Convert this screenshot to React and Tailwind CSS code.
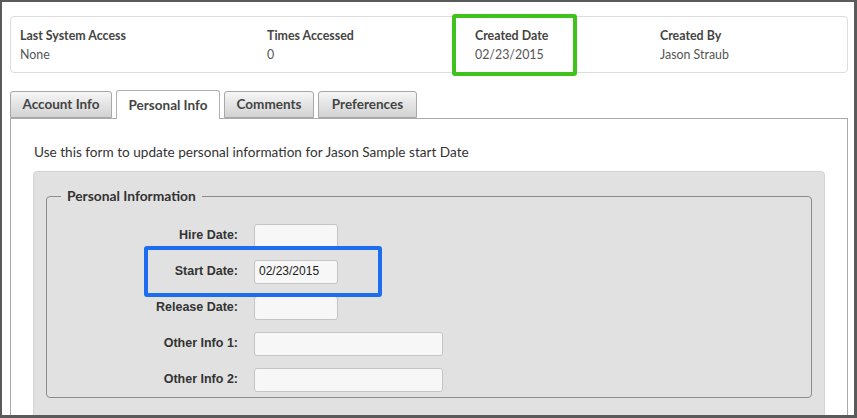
import React from 'react';

const sans = { fontFamily: 'Lato, "Open Sans", sans-serif' };
const arial = { fontFamily: '"Liberation Sans", Arial, sans-serif' };

const stats = [
  { label: 'Last System Access', value: 'None', w: 'w-[247px]' },
  { label: 'Times Accessed', value: '0', w: 'w-[208px]' },
  { label: 'Created Date', value: '02/23/2015', w: 'w-[185px]' },
  { label: 'Created By', value: 'Jason Straub', w: 'w-[150px]' },
];

const tabs = [
  { name: 'Account Info', w: 'w-[102px]' },
  { name: 'Personal Info', w: 'w-[104px]', active: true },
  { name: 'Comments', w: 'w-[90px]' },
  { name: 'Preferences', w: 'w-[99px]' },
];

const fields = [
  { label: 'Hire Date:', value: '', wide: false },
  { label: 'Start Date:', value: '02/23/2015', wide: false },
  { label: 'Release Date:', value: '', wide: false },
  { label: 'Other Info 1:', value: '', wide: true },
  { label: 'Other Info 2:', value: '', wide: true },
];

const App = () => {
  return (
    <div className="relative w-[857px] h-[418px] overflow-hidden bg-white border-l-2 border-t-2 border-r-[3px] border-b-[3px] border-[#5a5a5a]" style={sans}>
      <div className="pl-[8px] pr-[6px] pt-[14px]">
        {/* Summary card */}
        <div className="flex h-[57px] rounded-[4px] border border-[#dcdcdc] pl-[9px] pt-[11px]">
          {stats.map((s) => (
            <div key={s.label} className={s.w}>
              <div className="text-[12.4px] font-bold leading-[16px] text-[#444]">{s.label}</div>
              <div className="text-[12.4px] leading-[21px] text-[#555]">{s.value}</div>
            </div>
          ))}
        </div>

        {/* Tabs */}
        <div className="mt-[17px] flex items-end gap-[4px] h-[28px]">
          {tabs.map((t) => (
            <div
              key={t.name}
              className={
                t.active
                  ? `${t.w} h-[29px] -mb-px relative z-10 flex items-center justify-center rounded-t-[3px] border border-b-0 border-[#b0b0b0] bg-white text-[13.5px] font-bold text-[#444]`
                  : `${t.w} h-[27px] flex items-center justify-center rounded-t-[3px] border border-[#a8a8a8] bg-gradient-to-b from-[#f6f6f6] to-[#d2d2d2] text-[13.5px] font-bold text-[#444]`
              }
            >
              {t.name}
            </div>
          ))}
        </div>

        {/* Content panel */}
        <div className="h-[320px] border border-[#aaaaaa] pt-[24px] px-[22px]">
          <p className="text-[13.6px] leading-[18px] text-[#333] pl-[1px]">
            Use this form to update personal information for Jason Sample start Date
          </p>
          <div className="mt-[10px] h-[260px] rounded-t-[4px] border border-[#d4d4d4] bg-[#e1e1e1] px-[12px] pt-[14px]">
            <fieldset className="rounded-[4px] border border-[#8c8c8c] h-[212px]">
              <legend className="ml-[14px] px-[6px] text-[13.8px] font-bold text-[#333]">Personal Information</legend>
              <div className="flex flex-col gap-[12px] pt-[17px]">
                {fields.map((f) => (
                  <div key={f.label} className="flex items-center">
                    <div className="w-[207px] pr-[16px] text-right text-[12.5px] font-bold text-[#333]" style={arial}>
                      {f.label}
                    </div>
                    <div
                      className={`${f.wide ? 'w-[189px]' : 'w-[84px]'} h-[24px] rounded-[3px] border border-[#c4c4c4] bg-[#f7f7f7] px-[4px] text-[12px] leading-[20px] text-[#222]`}
                      style={arial}
                    >
                      {f.value}
                    </div>
                  </div>
                ))}
              </div>
            </fieldset>
          </div>
        </div>
      </div>

      {/* Highlight boxes */}
      <div className="absolute left-[450px] top-[12px] w-[125px] h-[62px] rounded-[3px] border-[4px] border-[#3ec21c]" />
      <div className="absolute left-[142px] top-[244px] w-[238px] h-[51px] rounded-[3px] border-[4px] border-[#1c6df0]" />
    </div>
  );
};

export default App;
